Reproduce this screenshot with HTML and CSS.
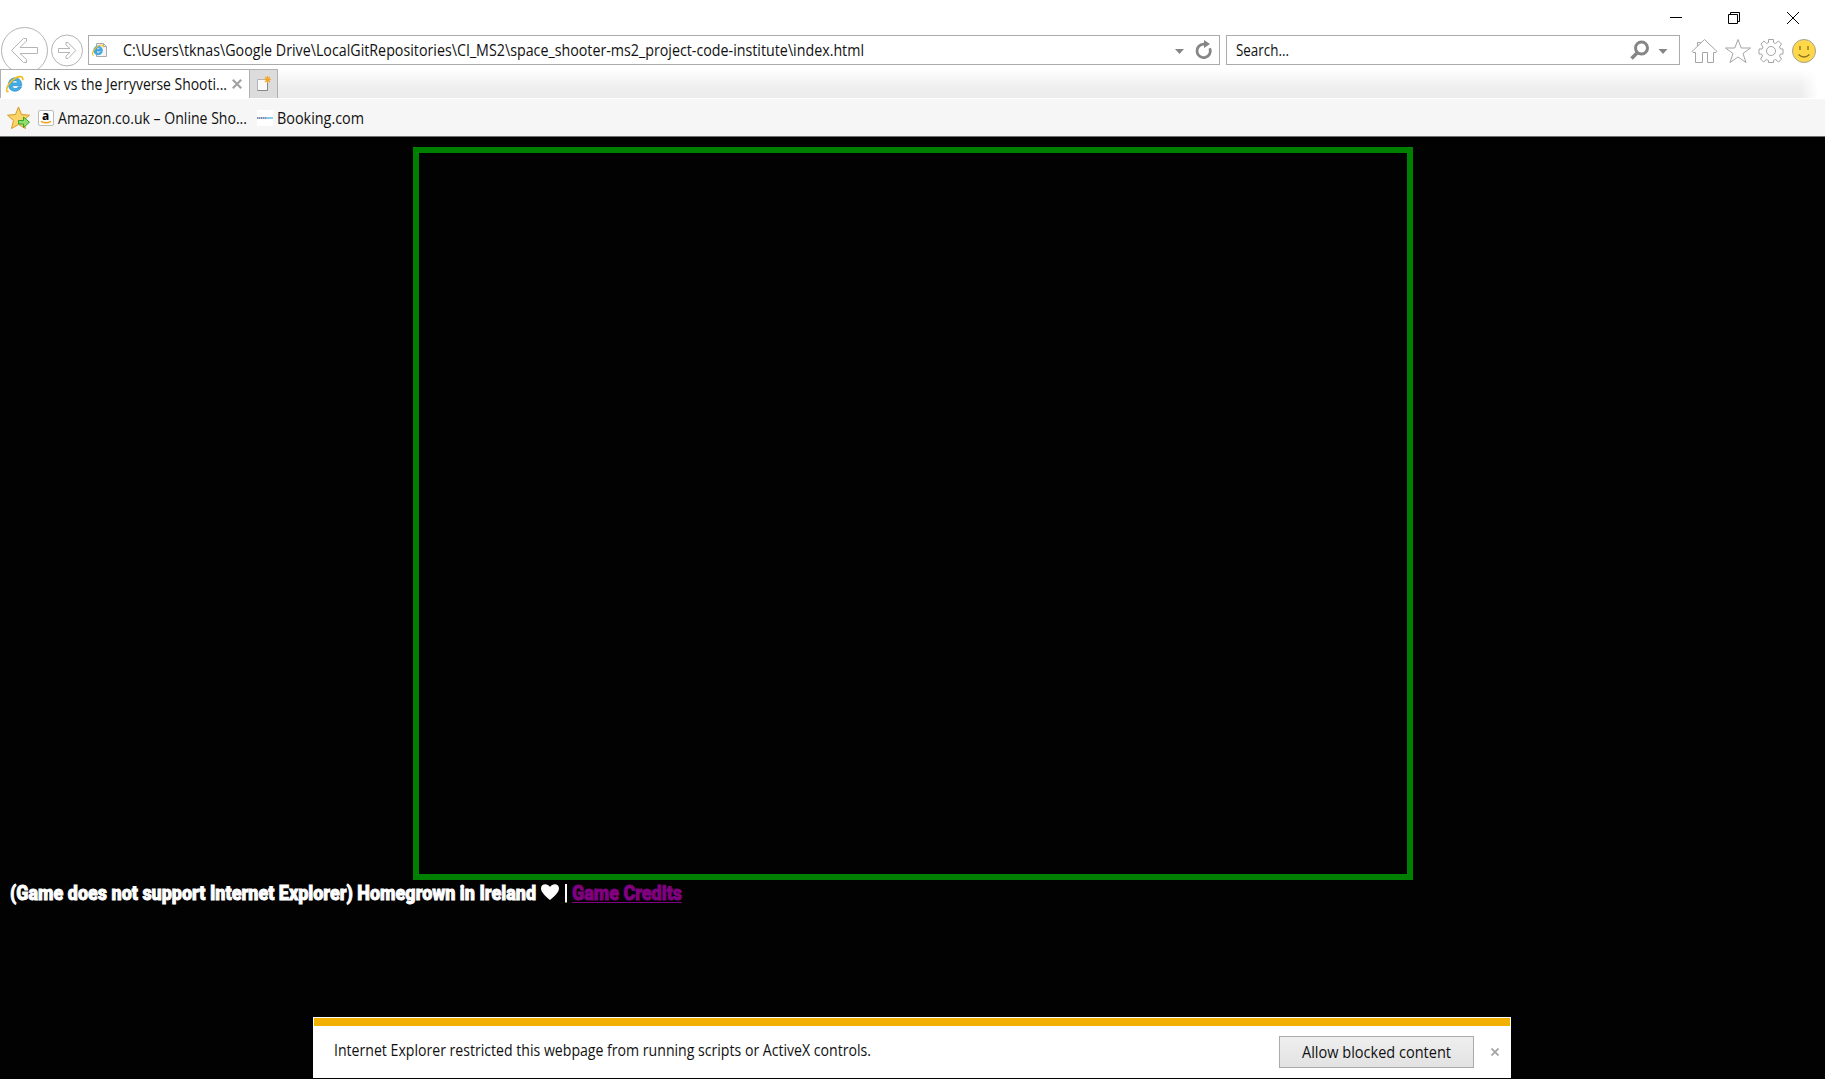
FILE: index.html
```html
<!DOCTYPE html>
<html lang="en">
<head>
<meta charset="utf-8">
<title>Rick vs the Jerryverse Shooting Game</title>
<link rel="stylesheet" href="styles.css">
</head>
<body>
<svg class="defs" width="0" height="0">
  <symbol id="ie" viewBox="0 0 16 16">
    <path d="M14 9.500H5.500c.2 3 4.400 3.300 5.300 1h3C11.500 16.500 2 15.500 2.200 8.400 2.400.5 14.300.3 14 9.500zM5.500 7h5c-.2-2.600-4.800-2.600-5 0z" fill="#42aee5" stroke="#2387c9" stroke-width=".6"/>
    <path d="M2.300 14.700C-1 15.500.2 9.500 5.800 4.600 10.500.5 16 .1 14.700 4.600" fill="none" stroke="#f3bd22" stroke-width="1.500"/>
  </symbol>
</svg>
<header class="chrome">
  <div class="window-buttons">
    <svg width="150" height="35" viewBox="0 0 150 35" fill="none" stroke="#000">
      <path d="M0 17.500h12M58.500 14.500h9v9h-9zM60.500 14v-1.500h9v9H68M117 12l12 12M129 12l-12 12"/>
    </svg>
  </div>
  <div class="nav">
    <svg class="history" width="88" height="34" viewBox="0 0 88 34" fill="none" stroke="#b4b4b4">
      <circle cx="24.500" cy="15.500" r="23"/>
      <path d="M11.500 15.500L23.500 3.500h3v2.500L20 12.500h17.500v6H20l6.500 6V27.500h-3z"/>
      <circle cx="67" cy="15.500" r="15.500"/>
      <path d="M75.800 15.500L68 7.500h-2v2.500l4 3.500H58.500v4H70L66 21v2.500h2z"/>
    </svg>
    <div class="box address">
      <svg class="page-icon" width="16" height="16" viewBox="0 0 16 16"><path d="M4.500 1.500h7l3 3v10h-10z" fill="#f5f5f5" stroke="#aaa"/><path d="M11.500 1.500v3h3" fill="none" stroke="#aaa"/><use href="#ie" x="0" y="2" width="12" height="12"/></svg>
      <svg class="label url" width="742" height="22"><text x="0" y="17" textLength="741" lengthAdjust="spacingAndGlyphs">C:\Users\tknas\Google Drive\LocalGitRepositories\CI_MS2\space_shooter-ms2_project-code-institute\index.html</text></svg>
      <svg class="end-icons" width="38" height="20" viewBox="0 0 38 20"><path d="M0 9h9L4.500 14z" fill="#858585"/><path d="M29 4.200a6.700 6.700 0 1 0 5.800 4" fill="none" stroke="#858585" stroke-width="2.800"/><path d="M29 0l6 4-6 4z" fill="#858585"/></svg>
    </div>
    <div class="box search">
      <svg class="label" width="54" height="22"><text x="0" y="17" textLength="53" lengthAdjust="spacingAndGlyphs">Search...</text></svg>
      <svg class="end-icons" width="38" height="20" viewBox="0 0 38 20"><circle cx="11.500" cy="8" r="6" fill="none" stroke="#858585" stroke-width="3"/><path d="M7 13L1.500 18.500" stroke="#858585" stroke-width="3.500"/><path d="M28.500 9h9L33 14z" fill="#858585"/></svg>
    </div>
    <svg class="tools" width="126" height="26" viewBox="0 0 126 26" fill="none" stroke="#a4a4a4">
      <path d="M1 13.500L13.500 1.500 26 13.500l-1 1h-2.500v10h-6v-10h-5v10H4.500v-10H2zM6.500 8V4.500h3V5"/>
      <path d="M47 1.500l3.200 8.500h9.300l-7.500 5.500 3 9-8-5.500-8 5.500 3-9L34.500 10h9.300z"/>
      <circle cx="80" cy="13" r="4.500"/>
      <path d="M77.500 1.500h5v3l2 1 3-2.500 3 3-2 3 1 2h2.500v5h-2.500l-1 2 2 3-3 3-3-2.500-2 1v2h-5v-2l-2-1-3 2.500-3-3 2-3-1-2h-2.500v-5H71l1-2-2-3 3-3 2.500 2.500 2-1z"/>
      <circle cx="113" cy="13" r="11.500" fill="#ffd84a" stroke="#a5a193"/>
      <path d="M109 8v4M117 8v4" stroke="#9a7b20" stroke-width="1.500"/><path d="M107.500 16.500q5.500 5 11 0" stroke="#8d7420" stroke-width="1.500"/>
    </svg>
  </div>
  <div class="tabs">
    <div class="tab">
      <svg width="18" height="18"><use href="#ie" width="18" height="18"/></svg>
      <svg class="label tab-title" width="194" height="22"><text x="0" y="16.500" textLength="193" lengthAdjust="spacingAndGlyphs">Rick vs the Jerryverse Shooti...</text></svg>
      <svg class="tab-close" width="10" height="10" viewBox="0 0 10 10"><path d="M.8.8l8.400 8.400M9.200.8L.8 9.200" stroke="#a2a2a2" stroke-width="2.200"/></svg>
    </div>
    <div class="new-tab">
      <svg width="16" height="16" viewBox="0 0 16 16"><path d="M1.500 3.500h10v11h-10z" fill="#fafafa" stroke="#b5b5b5"/><path d="M1.500 14.500h10v-8" fill="none" stroke="#888"/><path d="M11.500 0v7M8 3.500h7M9 1l5 5M14 1L9 6" stroke="#f2a526" stroke-width="1.200"/></svg>
    </div>
  </div>
  <div class="favorites">
    <svg class="star" width="24" height="24" viewBox="0 0 24 24"><path d="M11.500 1l3 7.500 8 .7-6 5.300 2 8-7-4-7 4 2-8-6-5.300 8-.7z" fill="#fbd36b" stroke="#d99a22" stroke-linejoin="round"/><path d="M11.500 14.500h5v-3.500l6 5.200-6 5.300V18h-5z" fill="#8ee06e" stroke="#36a32b"/></svg>
    <svg width="16" height="16" viewBox="0 0 16 16"><rect x=".5" y=".5" width="15" height="15" rx="1.500" fill="#fff" stroke="#bbb"/><text class="amazon-a" x="4" y="9.500">a</text><path d="M3 11.300q5 3 10 0" fill="none" stroke="#f4a21b" stroke-width="1.500"/></svg>
    <svg class="label amazon" width="190" height="22"><text x="0" y="17" textLength="189" lengthAdjust="spacingAndGlyphs">Amazon.co.uk – Online Sho...</text></svg>
    <svg class="booking-icon" width="16" height="16" viewBox="0 0 16 16"><path d="M0 0h16v16H0z" fill="#fff"/><path d="M0 8h10" stroke="#536b96" stroke-width="1.500" stroke-dasharray="1.500 .4"/><path d="M10 8h6" stroke="#62bde8" stroke-width="1.500"/></svg>
    <svg class="label booking" width="88" height="22"><text x="0" y="17" textLength="87" lengthAdjust="spacingAndGlyphs">Booking.com</text></svg>
  </div>
</header>
<main class="page">
  <div class="game"></div>
  <footer>
    <svg class="credits" width="690" height="27">
      <text x="0" y="19.500" textLength="526" lengthAdjust="spacingAndGlyphs">(Game does not support Internet Explorer) Homegrown in Ireland</text>
      <path d="M540 20C535 16 531 12 531 8.500c0-5 6.500-5.500 9-1.500 2.500-4 9-3.500 9 1.500 0 3.500-4 7.500-9 11.500z" fill="#fff"/>
      <path d="M556 4v18.500" stroke="#fff" stroke-width="2"/>
      <a href="#"><text class="link" x="562" y="19.500" textLength="110" lengthAdjust="spacingAndGlyphs">Game Credits</text><path d="M562 22.500h110" stroke="#800080"/></a>
    </svg>
  </footer>
  <div class="notice">
    <svg class="label" width="538" height="22"><text x="-1" y="15" textLength="537" lengthAdjust="spacingAndGlyphs">Internet Explorer restricted this webpage from running scripts or ActiveX controls.</text></svg>
    <button class="allow"><svg class="label" width="150" height="22"><text x="0" y="17" textLength="149" lengthAdjust="spacingAndGlyphs">Allow blocked content</text></svg></button>
    <svg class="dismiss" width="8" height="8" viewBox="0 0 8 8"><path d="M.5.5l7 7M7.500.5l-7 7" stroke="#a2a2a2" stroke-width="1.700"/></svg>
  </div>
</main>
</body>
</html>
```
FILE: styles.css
```css
* { box-sizing: border-box; }
body {
  margin: 0;
  height: 1079px;
  display: flex;
  flex-direction: column;
  overflow: hidden;
  background: #020202;
  font-family: "Open Sans", "Noto Sans", sans-serif;
}
svg { display: block; flex: none; }
.defs { position: absolute; }
.label { font-size: 15.5px; fill: #111; overflow: visible; }

.chrome { background: #fff; height: 137px; border-bottom: 1px solid #707070; }
.window-buttons { height: 35px; display: flex; justify-content: flex-end; padding-right: 5px; }
.nav { height: 34px; display: flex; }
.history { overflow: visible; clip-path: inset(-10px 0 0 0); }
.box {
  height: 30px;
  display: flex;
  align-items: center;
  border: 1px solid #ababab;
  background: #fff;
}
.address { width: 1132px; padding: 0 6px 0 3px; }
.url { margin-left: 15px; }
.end-icons { margin-left: auto; }
.search { width: 454px; margin-left: 6px; padding: 0 11px 0 9px; }
.tools { margin: 3px 0 0 11px; }

.tabs {
  height: 29px;
  display: flex;
  background: linear-gradient(to right, transparent 1800px, #fff 1818px), linear-gradient(#fff, #efefef 60%, #ececec);
}
.tab {
  width: 249px;
  display: flex;
  align-items: center;
  padding-left: 5px;
  background: #fff;
  border: 1px solid #b0b0b0;
  border-width: 1px 0 0 1px;
}
.tab-title { margin-left: 10px; }
.tab-close { margin-left: 4px; }
.new-tab {
  width: 29px;
  padding: 6px 0 0 6px;
  background: #dcdcdc;
  border: 1px solid #b0b0b0;
  border-bottom: 0;
}
.favorites {
  height: 38px;
  display: flex;
  align-items: center;
  padding-left: 7px;
  background: #f6f6f6;
  border-top: 1px solid #fff;
}
.star { margin-right: 7px; }
.amazon-a { font: bold 12px "Open Sans", sans-serif; }
.amazon { margin-left: 4px; }
.booking-icon { margin-left: 9px; }
.booking { margin-left: 4px; }

.page {
  height: 942px;
  display: flex;
  flex-direction: column;
  padding-top: 10px;
}
.game { width: 1000px; height: 733px; margin-left: 413px; border: 6px solid #008000; flex: none; }
footer { padding-left: 10px; }
.credits { font: 900 21px Roboto, "Open Sans", sans-serif; fill: #fff; }
.credits text { stroke: #fff; stroke-width: .9px; }
.credits .link { fill: #800080; stroke: #800080; }
.notice {
  width: 1198px;
  height: 61px;
  margin: auto 0 1px 313px;
  display: flex;
  align-items: center;
  padding: 8px 12px 0 22px;
  background: linear-gradient(#f2b000, #f2b000) 1px 1px / 1196px 8px no-repeat #fff;
}
.allow {
  width: 195px;
  height: 32px;
  margin: 0 17px 0 auto;
  padding: 0 0 0 22px;
  border: 1px solid #ababab;
  background: linear-gradient(#efefef, #e2e2e2);
  font-family: inherit;
}
```
